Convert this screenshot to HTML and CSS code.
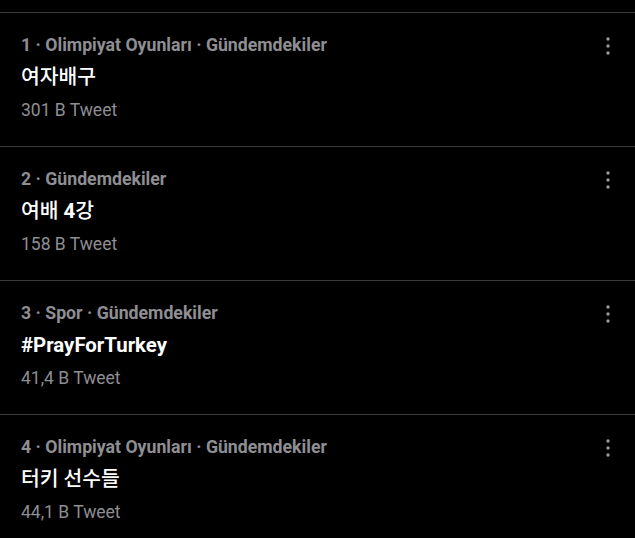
FILE: index.html
```html
<!DOCTYPE html>
<html lang="tr">
<head>
<meta charset="utf-8">
<link rel="stylesheet" href="styles.css">
</head>
<body>
<div class="list">
  <div class="top-spacer"></div>
  <div class="trend">
    <div class="info">
      <div class="meta">1 · Olimpiyat Oyunları · Gündemdekiler</div>
      <div class="title"><span class="ko" lang="ko">여자배구</span></div>
      <div class="count">301 B Tweet</div>
    </div>
    <svg class="more" width="8" height="20" viewBox="0 0 8 20"><circle cx="4" cy="3" r="1.7"/><circle cx="4" cy="10" r="1.7"/><circle cx="4" cy="17" r="1.7"/></svg>
  </div>
  <div class="trend">
    <div class="info">
      <div class="meta">2 · Gündemdekiler</div>
      <div class="title"><span class="ko" lang="ko">여배</span> 4<span class="ko" lang="ko">강</span></div>
      <div class="count">158 B Tweet</div>
    </div>
    <svg class="more" width="8" height="20" viewBox="0 0 8 20"><circle cx="4" cy="3" r="1.7"/><circle cx="4" cy="10" r="1.7"/><circle cx="4" cy="17" r="1.7"/></svg>
  </div>
  <div class="trend">
    <div class="info">
      <div class="meta">3 · Spor · Gündemdekiler</div>
      <div class="title">#PrayForTurkey</div>
      <div class="count">41,4 B Tweet</div>
    </div>
    <svg class="more" width="8" height="20" viewBox="0 0 8 20"><circle cx="4" cy="3" r="1.7"/><circle cx="4" cy="10" r="1.7"/><circle cx="4" cy="17" r="1.7"/></svg>
  </div>
  <div class="trend">
    <div class="info">
      <div class="meta">4 · Olimpiyat Oyunları · Gündemdekiler</div>
      <div class="title"><span class="ko" lang="ko">터키 선수들</span></div>
      <div class="count">44,1 B Tweet</div>
    </div>
    <svg class="more" width="8" height="20" viewBox="0 0 8 20"><circle cx="4" cy="3" r="1.7"/><circle cx="4" cy="10" r="1.7"/><circle cx="4" cy="17" r="1.7"/></svg>
  </div>
</div>
</body>
</html>
```
FILE: styles.css
```css
html, body {
  margin: 0;
  padding: 0;
  background: #000;
}
body {
  font-family: Roboto, "Noto Sans CJK KR", sans-serif;
  width: 635px;
  height: 538px;
  overflow: hidden;
}
.top-spacer {
  height: 12px;
}
.trend {
  border-top: 1px solid #3a3a3c;
  height: 111px;
  padding: 22px 0 0 21px;
  display: flex;
  justify-content: space-between;
  align-items: flex-start;
}
.info {
  display: flex;
  flex-direction: column;
}
.meta {
  color: #8e8e93;
  font-size: 17.7px;
  font-weight: 700;
  line-height: 20px;
}
.title {
  color: #fff;
  font-size: 20.4px;
  font-weight: 700;
  line-height: 24px;
  margin-top: 10px;
}
.ko {
  font-weight: 500;
}
.count {
  color: #8e8e93;
  font-size: 17.5px;
  line-height: 20px;
  margin-top: 11px;
}
.more {
  fill: #9a9a9e;
  margin: 1px 23px 0 0;
}
```
